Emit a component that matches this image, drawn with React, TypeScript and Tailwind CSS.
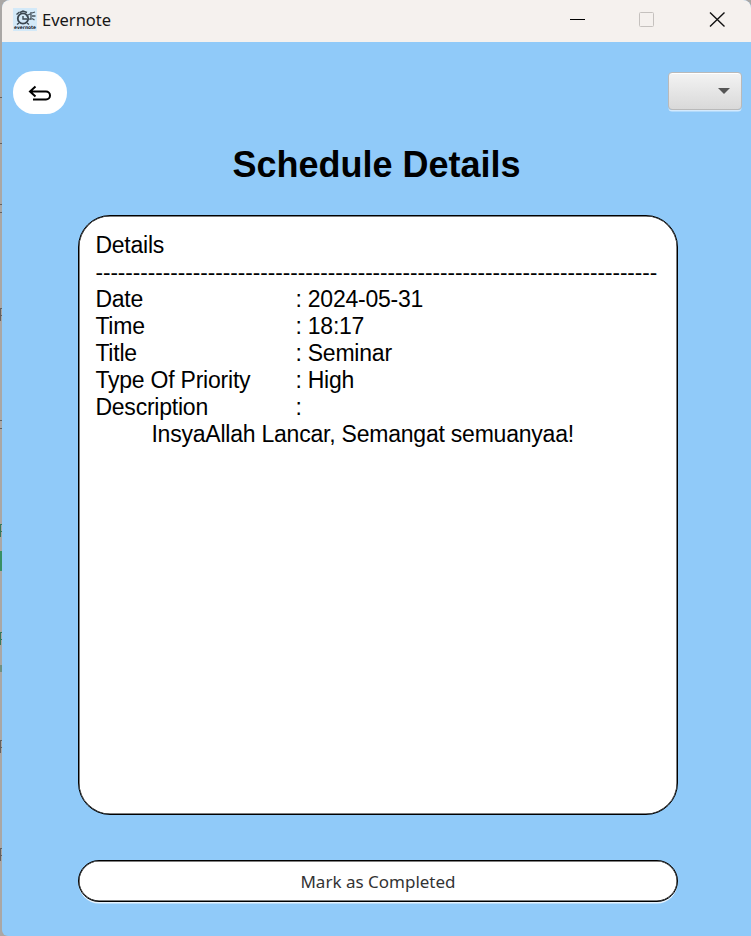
import React from "react";

const rows = [
  ["Date", "2024-05-31"],
  ["Time", "18:17"],
  ["Title", "Seminar"],
  ["Type Of Priority", "High"],
  ["Description", ""],
];

function AppLogo() {
  return (
    <svg className="ml-[11px] h-[23px] w-[24px] shrink-0" viewBox="0 0 24 23" fill="none">
      <rect width="24" height="23" fill="#d3e9f8" />
      <circle cx="10" cy="10.5" r="5.2" stroke="#3a4650" strokeWidth="1.8" />
      <path d="M10 8v3h4M3.5 6.5l3-2.5M7 4.5l3-1.5 4 1.5M6 15l-2 1.5M14 15l2 1.5" stroke="#3a4650" strokeWidth="1.4" />
      <path d="M13 8l5-2.5v5L14 12M19 5l3-1M19 8h3.5M19 10.5l2.5 1.5M18 4v8" stroke="#46525c" strokeWidth="1.3" />
      <text x="1" y="20.8" textLength="22" lengthAdjust="spacingAndGlyphs" fill="#142029" fontSize="4.8" fontWeight="900" fontFamily="'DejaVu Sans', sans-serif">evernote</text>
    </svg>
  );
}

function TitleBar() {
  return (
    <header className="flex h-[42px] shrink-0 items-start rounded-t-[8px] bg-[#f5f1ee]">
      <div className="flex h-[39px] items-center">
        <AppLogo />
        <span className="ml-[5px] font-['Noto_Sans',sans-serif] text-[16.5px] leading-[24px] text-[#171717]">Evernote</span>
      </div>
      <svg className="ml-auto mr-[24px] mt-[11px] h-[17px] w-[158px]" viewBox="0 0 158 17" fill="none">
        <path d="M1 8.5h15" stroke="#000" />
        <rect x="70.5" y="1.5" width="14" height="14" rx="1" stroke="#c5c1be" />
        <path d="M141 1.5l14.5 14M155.5 1.5l-14.5 14" stroke="#111" strokeWidth="1.4" />
      </svg>
    </header>
  );
}

export default function App() {
  return (
    <div className="flex h-[936px] w-[751px] overflow-hidden bg-[#aaa7a5]">
      <svg className="h-[936px] w-[2px] shrink-0" viewBox="0 0 2 936" fill="none">
        <path d="M0 97.5h2M0 143.5h2M0 204.5h2M0 212.5h2M0 420.5h2M0 428.5h2M.5 308v13M0 308.5h2M0 315.5h2M.5 740v13M0 740.5h2M0 747.5h2M.5 848v13M0 848.5h2M0 855.5h2" stroke="#65615f" />
        <path d="M.5 524v13M0 524.5h2M0 531.5h2M.5 632v13M0 632.5h2M0 639.5h2M1 665v7" stroke="#38785a" />
        <rect y="551" width="2" height="20" fill="#389065" />
      </svg>
      <div className="flex w-[749px] flex-col rounded-t-[8px] rounded-bl-[6px] bg-[#90caf9]">
        <TitleBar />
        <div className="mt-[29px] flex items-start justify-between pl-[11px] pr-[9px]">
          <button aria-label="Back" className="flex h-[43px] w-[54px] items-center justify-center rounded-[21px] bg-white">
            <svg className="mt-[3px] h-[18px] w-[24px]" viewBox="0 0 24 18" fill="none" stroke="#000" strokeWidth="2">
              <path d="M7.5 1.5L2 6.5l5.5 5M2.5 6.5H18a4 4 0 0 1 0 8H5" />
            </svg>
          </button>
          <button aria-label="Options" className="mt-px flex h-[38px] w-[74px] items-center justify-end rounded-[4px] border border-[#b9b9b9] bg-linear-to-b from-[#f3f3f3] to-[#d9d9d9] pr-[11px] shadow-[0_2px_0_-0.5px_#d4eafd,inset_0_1px_0_#fff]">
            <svg className="h-[6px] w-[12px]" viewBox="0 0 12 6"><path d="M0 0h12L6 6z" fill="#555" /></svg>
          </button>
        </div>
        <h1 className="mt-[28px] text-center font-['Liberation_Sans',sans-serif] text-[36px] font-bold leading-[46px] text-black">Schedule Details</h1>
        <main className="ml-[76px] mt-[27px] h-[600px] w-[600px] rounded-[32px] border border-black bg-white pl-[16.4px] pt-[16px] font-['Liberation_Sans',sans-serif] text-[23px] leading-[27px] tracking-[-0.22px] text-black shadow-[inset_0_0_0_0.5px_#000]">
          <p>Details</p>
          <p className="whitespace-nowrap text-[22.5px] leading-[27px] tracking-normal">{"-".repeat(75)}</p>
          {rows.map(([label, value]) => (
            <div className="flex whitespace-pre" key={label}>
              <span className="w-[200px]">{label}</span>
              <span>: {value}</span>
            </div>
          ))}
          <p className="pl-[56px]">InsyaAllah Lancar, Semangat semuanyaa!</p>
        </main>
        <button className="ml-[76px] mt-[45px] h-[42px] w-[600px] rounded-full border border-black bg-white pt-px font-['Noto_Sans',sans-serif] text-[17px] text-[#333] shadow-[0_2px_0_-0.5px_#e4f2fe,inset_0_0_0_0.5px_#000]">Mark as Completed</button>
      </div>
    </div>
  );
}
